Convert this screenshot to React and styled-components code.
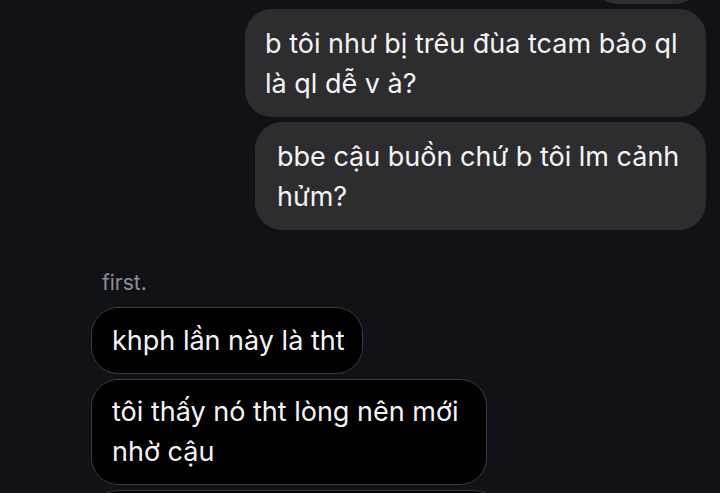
import React from "react"
import styled, { createGlobalStyle } from "styled-components"

const GlobalStyle = createGlobalStyle`
  html, body {
    margin: 0;
    padding: 0;
    height: 493px;
    overflow: hidden;
    background: #111217;
  }

  body {
    font-family: Inter, "Noto Sans", sans-serif;
    -webkit-font-smoothing: antialiased;
  }
`

const Thread = styled.main`
  display: flex;
  flex-direction: column;
  padding: 0 14px 0 91px;
  margin-top: -56px;
`

const Group = styled.section`
  display: flex;
  flex-direction: column;
  align-items: ${(p) => (p.$out ? "flex-end" : "flex-start")};
  gap: 5px;
  margin-top: ${(p) => p.$top || 0}px;
`

const Sender = styled.div`
  padding: 0 0 0 11px;
  margin-bottom: 6px;
  font-size: 21px;
  line-height: 26px;
  color: #8e8f96;
`

// outgoing bubbles are grey and borderless, incoming ones black with an outline
const Bubble = styled.div`
  box-sizing: border-box;
  width: ${(p) => (p.$w ? `${p.$w}px` : "auto")};
  min-height: ${(p) => p.$h || 0}px;
  margin-right: ${(p) => p.$mr || 0}px;
  padding: ${(p) => (p.$out ? "15px" : "12.5px")} 12px
    ${(p) => (p.$out ? "13px" : "12px")} ${(p) => p.$pl || 20}px;
  border-radius: 27px;
  font-size: 27px;
  line-height: 40px;
  color: #f4f4f6;
  background: ${(p) => (p.$out ? "#2d2d30" : "#000000")};
  border: ${(p) => (p.$out ? "none" : "1.5px solid #3b3b40")};
`

const App = () => (
  <>
    <GlobalStyle />
    <Thread>
      <Group $out>
        <Bubble $out $w={111} $h={60} $mr={4} />
        <Bubble $out $w={461}>
          b tôi như bị trêu đùa tcam bảo ql là ql dễ v à?
        </Bubble>
        <Bubble $out $w={451} $pl={22}>
          bbe cậu buồn chứ b tôi lm cảnh hửm?
        </Bubble>
      </Group>
      <Group $top={40}>
        <Sender>first.</Sender>
        <Bubble $w={272}>khph lần này là tht</Bubble>
        <Bubble $w={396}>tôi thấy nó tht lòng nên mới nhờ cậu</Bubble>
        <Bubble $w={410} $h={66} />
      </Group>
    </Thread>
  </>
)

export default App
